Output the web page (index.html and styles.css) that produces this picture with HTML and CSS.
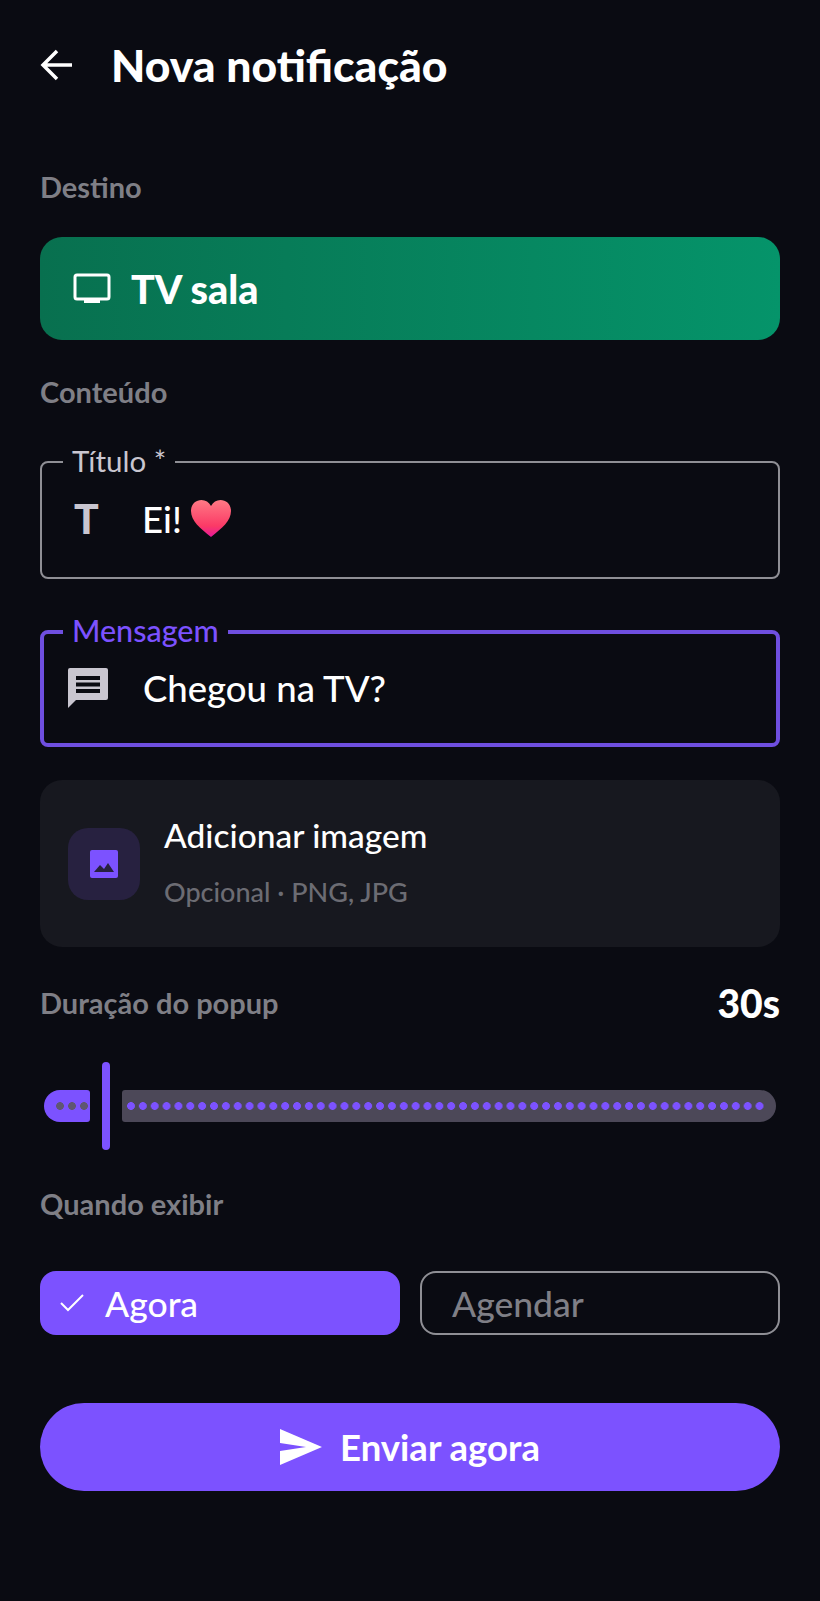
FILE: index.html
```html
<!DOCTYPE html>
<html lang="pt-BR">
<head>
  <meta charset="UTF-8">
  <meta name="viewport" content="width=device-width, initial-scale=1.0">
  <title>Nova notificação</title>
  <link rel="stylesheet" href="styles.css">
</head>
<body>
  <div class="screen">
    <header class="topbar">
      <svg class="back" viewBox="0 0 34 34" width="34" height="34"><path d="M32 17H3M17 3 3 17l14 14" fill="none" stroke="#fff" stroke-width="3.500"/></svg>
      <h1>Nova notificação</h1>
    </header>

    <p class="section-label first">Destino</p>
    <div class="target">
      <svg viewBox="0 0 38 32" width="38" height="32"><path d="M4 2h30a2 2 0 0 1 2 2v20a2 2 0 0 1-2 2H4a2 2 0 0 1-2-2V4a2 2 0 0 1 2-2Z" fill="none" stroke="#fff" stroke-width="3"/><rect x="11" y="26" width="16" height="4" fill="#fff"/></svg>
      <span>TV sala</span>
    </div>

    <p class="section-label content">Conteúdo</p>
    <div class="field">
      <span class="field-label">Título *</span>
      <span class="field-icon t-icon">T</span>
      <span class="field-text">Ei!</span>
      <svg class="heart" viewBox="0 0 40 38" width="40" height="38">
        <defs><linearGradient id="hg" x1="0" y1="0" x2="0" y2="1"><stop offset="0" stop-color="#ff7a85"/><stop offset=".7" stop-color="#fb3a66"/><stop offset="1" stop-color="#e8189a"/></linearGradient></defs>
        <path d="M20 37C9 28 0 21 0 11 0 4 5 0 10.500 0 14.500 0 18 2 20 6 22 2 25.500 0 29.500 0 35 0 40 4 40 11 40 21 31 28 20 37Z" fill="url(#hg)"/>
      </svg>
    </div>

    <div class="field active">
      <span class="field-label">Mensagem</span>
      <svg class="field-icon" viewBox="0 0 40 40" width="40" height="40"><path d="M2 0h36a2 2 0 0 1 2 2v28a2 2 0 0 1-2 2H8l-8 8V2a2 2 0 0 1 2-2Z" fill="#c9c6d0"/><path d="M8 8h24v4H8zM8 14.500h24v4H8zM8 21h24v4H8z" fill="#0a0b12"/></svg>
      <span class="field-text">Chegou na TV?</span>
    </div>

    <div class="image-card">
      <div class="image-icon">
        <svg viewBox="0 0 28 28" width="28" height="28"><rect width="28" height="28" rx="2" fill="#7c52ff"/><path d="M4 22l6-7 4 4 4-6 6 9Z" fill="#272140"/></svg>
      </div>
      <div class="image-text">
        <div class="image-title">Adicionar imagem</div>
        <div class="image-sub">Opcional · PNG, JPG</div>
      </div>
    </div>

    <div class="duration-row">
      <span class="section-label">Duração do popup</span>
      <span class="duration-value">30s</span>
    </div>
    <div class="slider">
      <div class="slider-active"></div>
      <div class="slider-thumb"></div>
      <div class="slider-track"><div class="slider-dots"></div></div>
    </div>

    <p class="section-label when">Quando exibir</p>
    <div class="choices">
      <div class="choice selected">
        <svg viewBox="0 0 24 20" width="24" height="20"><path d="M1 10l7 7L23 2" fill="none" stroke="#fff" stroke-width="2"/></svg>
        <span>Agora</span>
      </div>
      <div class="choice">
        <span>Agendar</span>
      </div>
    </div>

    <button class="send">
      <svg viewBox="0 0 42 36" width="42" height="36"><path d="M0 0l42 18L0 36V22l26-4L0 14Z" fill="#fff"/></svg>
      <span>Enviar agora</span>
    </button>
  </div>
</body>
</html>
```

FILE: styles.css
```css
* {
  box-sizing: border-box;
}
body {
  margin: 0;
  background: #0a0b12;
  color: #fff;
  font-family: Lato, "Noto Sans", sans-serif;
}
.screen {
  width: 820px;
  height: 1601px;
  padding: 0 40px;
}
.topbar {
  display: flex;
  align-items: center;
  height: 130px;
}
.back {
  flex: none;
}
.topbar h1 {
  margin: 0 0 0 37px;
  font-size: 44.500px;
  font-weight: 900;
  line-height: 1;
}
.section-label {
  margin: 0;
  color: #7f7f86;
  font-size: 29px;
  font-weight: 700;
  line-height: 34px;
}
.section-label.first {
  margin-top: 40px;
}
.section-label.content {
  margin-top: 35px;
}
.section-label.when {
  margin-top: 37px;
}
.target {
  display: flex;
  align-items: center;
  gap: 20px;
  height: 103px;
  margin-top: 33px;
  padding-left: 33px;
  border-radius: 22px;
  background: linear-gradient(90deg, #08704f, #05946a);
  font-size: 39.500px;
  font-weight: 900;
}
.field {
  position: relative;
  display: flex;
  align-items: center;
  height: 118px;
  margin-top: 52px;
  padding-bottom: 2px;
  border: 2px solid #8f8f95;
  border-radius: 8px;
}
.field.active {
  height: 117px;
  margin-top: 51px;
  border: 4px solid #6f4fe0;
}
.field-label {
  position: absolute;
  top: -19px;
  left: 21px;
  padding: 0 9px;
  background: #0a0b12;
  color: #c9c6d0;
  font-size: 29.500px;
  line-height: 34px;
}
.active .field-label {
  top: -21px;
  left: 19px;
  color: #7c52ff;
  font-size: 30.500px;
  font-weight: 500;
}
.field-icon {
  flex: none;
  width: 40px;
  margin-left: 24px;
}
.t-icon {
  margin-left: 32px;
  margin-right: -7px;
  color: #c9c6d0;
  font-size: 41px;
  font-weight: 900;
  line-height: 40px;
}
.field-text {
  margin-left: 35px;
  font-size: 36.500px;
  font-weight: 500;
}
.heart {
  margin-left: 9px;
}
.image-card {
  display: flex;
  align-items: center;
  gap: 24px;
  height: 167px;
  margin-top: 33px;
  padding-left: 28px;
  border-radius: 22px;
  background: #17181f;
}
.image-icon {
  display: flex;
  flex: none;
  align-items: center;
  justify-content: center;
  width: 72px;
  height: 72px;
  border-radius: 20px;
  background: #272140;
}
.image-text {
  padding-bottom: 4px;
}
.image-title {
  font-size: 33.500px;
  font-weight: 500;
  line-height: 38px;
}
.image-sub {
  margin-top: 22px;
  color: #6c6c73;
  font-size: 27px;
  font-weight: 500;
  line-height: 32px;
}
.duration-row {
  display: flex;
  align-items: center;
  justify-content: space-between;
  height: 40px;
  margin-top: 36px;
}
.duration-value {
  font-size: 39px;
  font-weight: 900;
}
.slider {
  display: flex;
  align-items: center;
  height: 88px;
  margin-top: 39px;
  padding-left: 4px;
}
.slider-active {
  width: 46px;
  height: 32px;
  border-radius: 16px 3px 3px 16px;
  background-color: #7c52ff;
  background-image:
    radial-gradient(circle at 4px 4px, #5f5672 3.600px, transparent 4.100px),
    radial-gradient(circle at 4px 4px, #5f5672 3.600px, transparent 4.100px),
    radial-gradient(circle at 4px 4px, #5f5672 3.600px, transparent 4.100px);
  background-position: 12px 12px, 24px 12px, 36px 12px;
  background-size: 8px 8px;
  background-repeat: no-repeat;
}
.slider-thumb {
  width: 8px;
  height: 88px;
  margin-left: 12px;
  border-radius: 4px;
  background: #7c52ff;
}
.slider-track {
  width: 654px;
  height: 32px;
  margin-left: 12px;
  padding: 12px 0 0 5px;
  border-radius: 3px 16px 16px 3px;
  background: #4c4858;
}
.slider-dots {
  width: 638px;
  height: 8px;
  background: radial-gradient(circle at 4px 4px, #7c52ff 3.600px, transparent 4.100px) 0 0 / 11.870px 8px repeat-x;
}
.choices {
  display: grid;
  grid-template-columns: 360px 360px;
  gap: 20px;
  margin-top: 50px;
}
.choice {
  display: flex;
  align-items: center;
  height: 64px;
  padding-left: 30px;
  border: 2px solid #8f8f95;
  border-radius: 16px;
  color: #7f7f86;
  font-size: 35.500px;
  font-weight: 500;
}
.choice.selected {
  gap: 21px;
  padding-left: 20px;
  border: 0;
  background: #7c52ff;
  color: #fff;
}
.send {
  display: flex;
  align-items: center;
  justify-content: center;
  gap: 18px;
  width: 100%;
  height: 88px;
  margin-top: 68px;
  padding: 0;
  border: 0;
  border-radius: 44px;
  background: #7c52ff;
  color: #fff;
  font-family: inherit;
  font-size: 36.500px;
  font-weight: 700;
}
```
